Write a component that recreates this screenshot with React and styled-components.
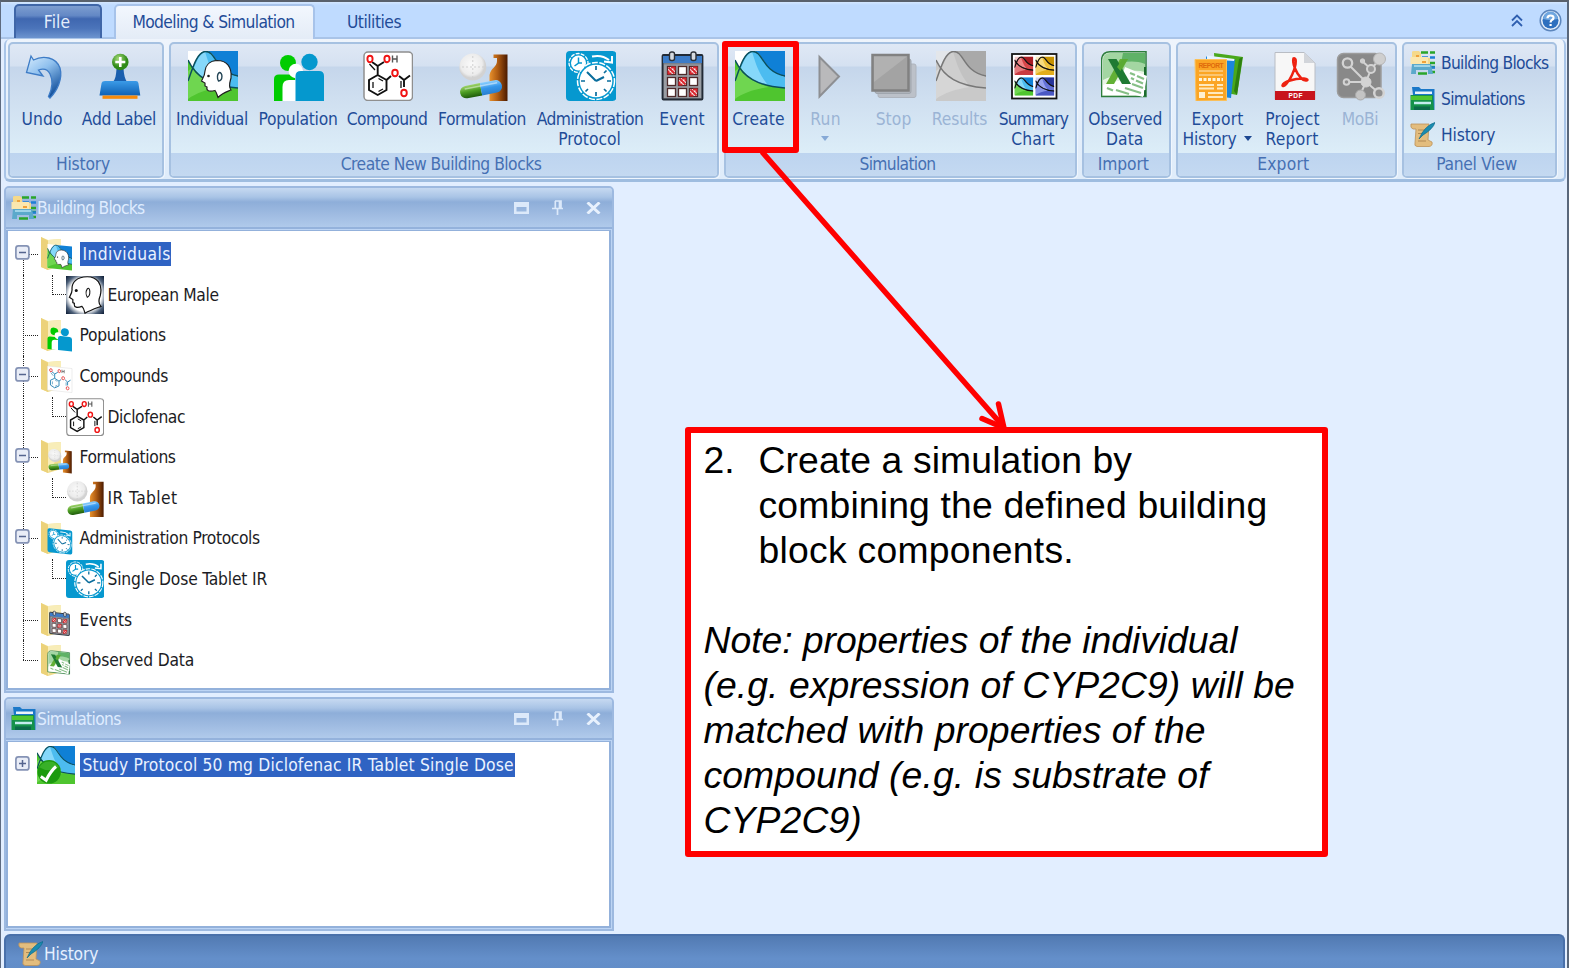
import React from "react";
import styled, { createGlobalStyle, css } from "styled-components";

const UI_FONT = '"DejaVu Sans Condensed", "DejaVu Sans", Tahoma, sans-serif';

/* Letter spacing (px) for each interface text. */
const TRACKING = {
  Undo: 0.09, "Add Label": -0.3, Individual: -0.38, Population: -0.26, Compound: -0.48,
  Formulation: -0.42, Administration: -0.5, Protocol: 0.02, Event: 0.2, Create: 0.15,
  Run: 0.3, Stop: 0.1, Results: -0.06, Summary: -0.8, Chart: 0.15, Observed: -0.1,
  Data: 0.05, Export: 0.2, History: -0.16, Project: 0.2, Report: 0.25, MoBi: -0.4,
  "Building Blocks": -0.72, Simulations: -0.66, "Create New Building Blocks": -0.5,
  Simulation: -0.7, Import: -0.1, "Panel View": -0.3, File: 0.1,
  "Modeling & Simulation": -0.64, Utilities: -0.5, Individuals: 0.4,
  "European Male": -0.35, Populations: -0.3, Compounds: -0.48, Diclofenac: -0.4,
  Formulations: -0.38, "IR Tablet": 0.42, "Administration Protocols": -0.38,
  "Single Dose Tablet IR": -0.17, Events: 0, "Observed Data": -0.17,
  "Study Protocol 50 mg Diclofenac IR Tablet Single Dose": 0.18,
};

const Global = createGlobalStyle`
  * { box-sizing: border-box; }
  body { margin: 0; overflow: hidden; background: #e2eeff; }
  svg { display: block; flex: none; }
`;

const TextSpan = styled.span`
  white-space: nowrap;
  letter-spacing: ${(p) => p.$track}px;
`;
const Text = ({ children }) => <TextSpan $track={TRACKING[children] ?? 0}>{children}</TextSpan>;

/* ---------- window ---------- */

const Window = styled.div`
  position: relative;
  width: 1569px;
  height: 968px;
  display: flex;
  flex-direction: column;
  overflow: hidden;
  font: 17.3px/20px ${UI_FONT};
  color: #1f4c98;
  background: #e2eeff;
  border-top: 2px solid #59616c;
  border-left: 1px solid #5e6b80;
  border-right: 2px solid #59677b;
`;

const TabStrip = styled.div`
  height: 37px;
  flex: none;
  display: flex;
  align-items: flex-end;
  padding-left: 13px;
  background: linear-gradient(#d4e7ff 0, #bfdbff 3px, #bfdbff 100%);
  border-bottom: 2px solid #a9c4e8;
`;

const tabBase = css`
  display: flex;
  justify-content: center;
  align-items: center;
  height: 34px;
  border-radius: 5px 5px 0 0;
`;
const FileTab = styled.div`
  ${tabBase}
  width: 88px;
  padding: 0 2px 0 0;
  color: #e4eefc;
  margin-bottom: -1px;
  border: 2px solid #3f66a8;
  border-bottom: 0;
  background: linear-gradient(#7d9dd0 0, #6388c5 30%, #3f67b0 40%, #4b74ba 70%, #6d94cf 100%);
`;
const ActiveTab = styled.div`
  ${tabBase}
  width: 201px;
  height: 37px;
  margin: 0 0 -4px 12px;
  padding: 0 2px 4px 0;
  background: linear-gradient(#f2f7fe, #e3ebf6);
  border: 2px solid #a7c3ea;
  border-bottom: 0;
`;
const PlainTab = styled.div`
  ${tabBase}
  width: 118px;
  padding-top: 3px;
`;
const StripTools = styled.div`
  margin-left: auto;
  display: flex;
  align-items: center;
  gap: 16px;
  height: 34px;
  padding-right: 5px;
`;

/* ---------- ribbon ---------- */

const Ribbon = styled.div`
  flex: none;
  display: flex;
  gap: 5px;
  height: 143px;
  margin: 0 1px 0 3px;
  padding: 3px 3px 1px 2px;
  background: linear-gradient(#eef4fc, #dfecfa);
  border: 2px solid #a9c5e8;
  border-top: 0;
  border-bottom: 3px solid #9fbde0;
  border-radius: 6px;
`;
const Group = styled.div`
  width: ${(p) => p.$w}px;
  display: flex;
  flex-direction: column;
  border: 2px solid #a6c1e1;
  border-radius: 5px;
  overflow: hidden;
  background: linear-gradient(#dfe8f5 0, #d5e1f1 22px, #c5d6eb 23px, #cfdff0 55px, #dcedf8 108px);
  box-shadow: 1px 1px 0 #eff6fe;
`;
const GroupBody = styled.div`
  flex: 1;
  display: flex;
  padding-top: 7px;
`;
const GroupTitle = styled.div`
  height: 23px;
  line-height: 23px;
  padding-right: 6px;
  text-align: center;
  color: #4670b3;
  background: linear-gradient(#bdd4ef, #c4d9f1);
`;
const Button = styled.div`
  width: ${(p) => p.$w}px;
  flex: none;
  display: flex;
  flex-direction: column;
  align-items: center;
  color: ${(p) => (p.$off ? "#9bb4d5" : "inherit")};
`;
const Caption = styled.div`
  display: flex;
  align-items: center;
  justify-content: center;
  gap: 7px;
  height: 20px;
  margin-top: ${(p) => (p.$first ? 8 : 0)}px;
  padding-right: ${(p) => (p.$first ? 2 : 3)}px;
`;
const DropArrow = styled.i`
  width: 0;
  height: 0;
  margin-top: -2px;
  border: 4px solid transparent;
  border-top: 5px solid ${(p) => (p.$off ? "#86a9d6" : "#1c4791")};
  border-bottom: 0;
`;
const SideList = styled.div`
  display: flex;
  flex-direction: column;
  gap: 11px;
  padding-left: 6px;
  margin-top: -1px;
`;
const SideItem = styled.div`
  display: flex;
  align-items: center;
  gap: 6px;
  height: 25px;
`;

/* ---------- docked panels ---------- */

const Workspace = styled.div`
  flex: 1;
  display: flex;
  flex-direction: column;
  gap: 4px;
  padding: 4px 0 0 3px;
`;
const Panel = styled.section`
  width: 610px;
  height: ${(p) => p.$h}px;
  flex: none;
  display: flex;
  flex-direction: column;
  border: 2px solid #9db9e0;
  border-radius: 5px 5px 0 0;
  background: #bcd4f4;
  overflow: hidden;
`;
const PanelHeader = styled.header`
  height: 41px;
  flex: none;
  display: flex;
  align-items: center;
  gap: 1px;
  padding: 0 11px 0 5px;
  color: #dfecff;
  border-bottom: 2px solid #94b2dc;
  background: linear-gradient(#c6d9f1 0, #a9c4e6 9px, #8eaed9 14px, #a0bce2 27px, #b0caeb 100%);
`;
const HeaderTools = styled.div`
  margin-left: auto;
  display: flex;
  align-items: center;
  gap: 21px;
`;
const PanelBody = styled.div`
  flex: 1;
  margin: 1px 1px 1px 0;
  border: 2px solid #93b1db;
  border-top-width: 1px;
  padding: 3px 0 0 6.5px;
  background: #fff;
  color: #1c1c24;
`;
const HistoryBar = styled.footer`
  flex: 1;
  display: flex;
  align-items: center;
  gap: 1px;
  margin: -1px 2px 0 0;
  padding: 3px 0 0 12px;
  color: #e6f0ff;
  border: 2px solid #4970aa;
  border-bottom: 0;
  border-radius: 6px 6px 0 0;
  background: linear-gradient(#527ab2, #648fca 70%, #628dc8);
`;

/* ---------- tree ---------- */

const Row = styled.div`
  height: 40.6px;
  display: flex;
  align-items: center;
`;
const dotted = "1px dotted #222";
const Trunk = styled.div`
  position: relative;
  align-self: stretch;
  width: ${(p) => (p.$pos === "none" ? 22 : 25)}px;
  display: flex;
  align-items: center;
  &::before {
    content: "";
    position: absolute;
    left: 8px;
    top: ${(p) => (p.$pos === "first" ? "50%" : 0)};
    bottom: ${(p) => (p.$pos === "last" ? "50%" : 0)};
    border-left: ${(p) => (p.$pos === "none" ? "0" : dotted)};
  }
  &::after {
    content: "";
    position: absolute;
    left: 8px;
    right: 2px;
    top: 50%;
    border-top: ${(p) => (p.$stub ? dotted : "0")};
  }
`;
const Elbow = styled.div`
  width: 14px;
  height: 20px;
  margin: -20px 0 0 12px;
  border-left: ${dotted};
  border-bottom: ${dotted};
`;
const Toggle = styled.svg`
  position: relative;
  z-index: 1;
  margin-top: -3px;
`;
const NodeLabel = styled.div`
  margin-left: ${(p) => p.$gap}px;
  line-height: 24px;
`;
const SelectedLabel = styled(NodeLabel)`
  height: 24px;
  width: ${(p) => p.$w}px;
  padding-left: 3px;
  overflow: hidden;
  color: #eaf2ff;
  background: #2f63c3;
`;

/* ---------- annotation ---------- */

const Overlay = styled.svg`
  position: absolute;
  left: -1px;
  top: -2px;
  pointer-events: none;
`;
const Callout = styled.aside`
  position: absolute;
  left: 684px;
  top: 425px;
  width: 643px;
  height: 430px;
  border: 6px solid #f00;
  border-radius: 3px;
  background: #fff;
  color: #000;
  font: 37.33px/45px "Liberation Sans", Arial, sans-serif;
  padding: 5px 0 0 12.5px;
`;
const Step = styled.div`
  display: flex;
`;
const StepNumber = styled.div`
  width: 55px;
`;
const Note = styled.div`
  margin-top: 45px;
  font-style: italic;
`;
const Line = styled.div`
  white-space: nowrap;
  letter-spacing: ${(p) => p.$track}px;
`;

/* ---------- icons (50 x 50 grid) ---------- */

const Icon = ({ size = 50, children, box = "0 0 50 50" }) => (
  <svg width={size} height={size} viewBox={box}>{children}</svg>
);

const PALETTES = {
  color: { dark: "#0f80d6", light: "#4cbcf0", sheen: "#86d8fa", low: "#4fc52f", low2: "#6fd650", line: "#0b4f5c", sky: "#fff" },
  gray: { dark: "#a9a9a9", light: "#c2c2c2", sheen: "#cecece", low: "#c9c9c9", low2: "#d6d6d6", line: "#777", sky: "#e3e6ea" },
  red: { dark: "#a81c22", light: "#d8474b", sheen: "#e88", low: "#c93a40", low2: "#e47b7e", line: "#3d0508", sky: "#f3c9c9" },
  gold: { dark: "#c79200", light: "#efc23a", sheen: "#f7dc80", low: "#e3ae1c", low2: "#f2cf62", line: "#4c3700", sky: "#faecc0" },
  navy: { dark: "#27349a", light: "#6472d8", sheen: "#98a3ee", low: "#4a58c4", low2: "#8793e6", line: "#0d1450", sky: "#ccd1f5" },
};
const Curves = ({ tone = "color" }) => {
  const c = PALETTES[tone];
  return (
    <g>
      <rect width="50" height="50" fill={c.sky} />
      <path d="M17 0H50V26C36 22 32 15 27 7C24 2 21 0 17 0Z" fill={c.dark} />
      <path d="M5 17C8 8 11 1 17 0C21 0 24 2 27 7C33 17 38 22 50 26V38C30 36 15 31 5 17Z" fill={c.light} />
      <path d="M6 17C9 9 12 3 17 1C20 9 22 20 32 33C20 31 12 27 6 17Z" fill={c.sheen} />
      <path d="M0 9C8 26 22 35 50 37V50H0Z" fill={c.low} />
      <path d="M0 20L5 16C12 26 22 33 34 36C20 38 8 42 0 48Z" fill={c.low2} />
      <path d="M0 9C8 26 22 35 50 37M0 30C4 20 8 2 17 .5C29 0 26 20 50 25" fill="none" stroke={c.line} strokeWidth="1.5" />
    </g>
  );
};
const Head = ({ stroke = "#222" }) => (
  <g>
    <path d="M29 9.5C21 10 17.500 15 17 20C17 24 15 27 13.500 30L17 32L17 35L19 36C18 40 21 41 27 39.500C29 42 29 44 30 46.500C34 42 38 41 43 39C40 35 42 31 43 27C44 16 39 9.500 29 9.500Z" fill="#fff" stroke={stroke} strokeWidth="1.2" />
    <path d="M31 21.500C35 21 35 30 30.500 30C29 27 29 24 31 21.500" fill="none" stroke="#245" strokeWidth="1.4" />
    <circle cx="20.500" cy="25" r="1.300" fill="#222" />
  </g>
);
const IndividualArt = () => <g><Curves /><Head /></g>;
const PopulationArt = () => (
  <g>
    <circle cx="14" cy="12" r="8" fill="#0c0" />
    <path d="M0 50V28Q0 23.500 5 23.500H21V50Z" fill="#0c0" />
    <circle cx="21.800" cy="20" r="7.200" fill="#fff" />
    <path d="M8.500 50V36Q8.500 29 15 29H22V50Z" fill="#fff" />
    <circle cx="35.500" cy="11" r="8.200" fill="#0598ce" />
    <path d="M21.500 50V25Q21.500 20 27 20H45Q50 20 50 25V50Z" fill="#0598ce" />
  </g>
);
const Molecule = ({ bond = "#111", oxygen = "#f01414" }) => (
  <g>
    <g fill="none" stroke={bond} strokeWidth="1.900">
      <path d="M14.700 24L23.500 29V39L14.700 44L6 39V29ZM14.700 24V15L9 11M14.700 15L21 11M23.500 29L28 25M36 25L41 29L47 24.500M41 29V36" />
      <path d="M10 31V37M15.500 27.500L20 30M15.500 40.500L20 38M12 19L6.500 13M38 30V37" strokeWidth="1.300" />
    </g>
    <g fill="none" stroke={oxygen} strokeWidth="1.900">
      <ellipse cx="7" cy="8" rx="2.600" ry="3.200" />
      <ellipse cx="24" cy="8" rx="2.600" ry="3.200" />
      <ellipse cx="32" cy="22" rx="2.800" ry="3.200" />
      <ellipse cx="41" cy="42" rx="2.800" ry="3.200" />
    </g>
    <path d="M29.500 4.500V11.500M34 4.500V11.500M29.500 8H34" stroke="#555" strokeWidth="1.400" />
  </g>
);
const CompoundArt = () => (
  <g><rect x="1" y="1" width="48.500" height="48.500" rx="4" fill="#fff" stroke="#8f8f8f" strokeWidth="1.500" /><Molecule /></g>
);
const FormulationArt = () => (
  <g>
    <defs>
      <linearGradient id="bottle"><stop offset="0" stopColor="#e8912c" /><stop offset=".45" stopColor="#b05c12" /><stop offset="1" stopColor="#4a1a00" /></linearGradient>
      <linearGradient id="pillG" x2="0" y2="1"><stop offset="0" stopColor="#9ed36a" /><stop offset=".5" stopColor="#4b9c22" /><stop offset="1" stopColor="#1f5c0c" /></linearGradient>
      <linearGradient id="pillB" x2="0" y2="1"><stop offset="0" stopColor="#8ccfff" /><stop offset=".5" stopColor="#3596ea" /><stop offset="1" stopColor="#2a7fd0" /></linearGradient>
      <radialGradient id="tab" cx=".45" cy=".4"><stop offset="0" stopColor="#fafafa" /><stop offset=".8" stopColor="#ececec" /><stop offset="1" stopColor="#d2d2d2" /></radialGradient>
    </defs>
    <path d="M35.500 3.500H49.500V50H31.500V24C32.500 17 39 16 39 10V7H35.500Z" fill="url(#bottle)" />
    <circle cx="14.800" cy="16" r="13.500" fill="url(#tab)" />
    <path d="M14.800 5V27M4 16H26" stroke="#cfcfcf" strokeDasharray="2 2" />
    <g transform="rotate(-11 23 38)">
      <path d="M23 32V44.500H8A6.200 6.200 0 0 1 8 32Z" fill="url(#pillG)" />
      <path d="M23 32H38A6.200 6.200 0 0 1 38 44.500H23Z" fill="url(#pillB)" />
      <path d="M7 35H40" stroke="#fff" strokeOpacity=".45" strokeWidth="1.500" />
    </g>
  </g>
);
const ProtocolArt = () => (
  <g>
    <rect width="50.500" height="50" rx="4" fill="#0698cf" />
    <circle cx="12.500" cy="12" r="9.500" fill="#0698cf" stroke="#fff" strokeWidth="1.300" strokeDasharray="4 1.200" />
    <circle cx="12.500" cy="12" r="7.500" fill="#fff" />
    <path d="M12.500 6.500V12L8.500 15M12.500 12L16 12" fill="none" stroke="#0698cf" strokeWidth="1.500" />
    <circle cx="30" cy="30" r="18.500" fill="#0698cf" stroke="#fff" strokeWidth="1.500" strokeDasharray="6 1.500" />
    <circle cx="30" cy="30" r="16.300" fill="#fff" />
    <path d="M30 30L21 21M30 30L38 26" fill="none" stroke="#0a6d9c" strokeWidth="2" />
    <path d="M30 15V19M30 41V45M15 30H19M41 30H45M19.500 40.500L22 38M40.500 40.500L38 38M40.500 19.500L38 22" stroke="#0a6d9c" strokeWidth="1.700" />
    <path d="M26 5.500C33 4 38 5 43 9M46 5V11.500L38 10.500" fill="none" stroke="#fff" strokeWidth="2" />
  </g>
);
const EventArt = () => (
  <g>
    <rect x="4.500" y="4" width="40" height="44.500" rx="1" fill="#7b8088" stroke="#222a35" strokeWidth="1.800" />
    <rect x="5" y="5" width="39" height="7" fill="#3c7cc8" />
    <rect x="6" y="13.500" width="37" height="33.500" fill="#9a9ea4" />
    {[0, 1, 2].map((r) => [0, 1, 2].map((c) => {
      const hot = (r === 0 && c !== 1) || (r === 1 && c === 1) || (r === 2 && c === 2);
      const x = 9.5 + c * 11, y = 15.5 + r * 11;
      return (
        <g key={`${r}${c}`}>
          <rect x={x} y={y} width="8" height="8" fill="#fff" stroke="#4d2a2a" strokeWidth="1.300" />
          {hot && <path d={`M${x + 1} ${y + 1}L${x + 7} ${y + 7}M${x + 3.5} ${y + 1}H${x + 7}V${y + 4}M${x + 1} ${y + 4}V${y + 7}H${x + 4}`} stroke="#d8252c" strokeWidth="2" fill="none" />}
        </g>
      );
    }))}
    <rect x="11.500" y="1" width="5" height="8.500" rx="2" fill="#d5dae0" stroke="#2b3038" strokeWidth="1.400" />
    <rect x="33" y="1" width="5" height="8.500" rx="2" fill="#d5dae0" stroke="#2b3038" strokeWidth="1.400" />
  </g>
);
const ExcelArt = () => (
  <g>
    <path d="M9 .8H45V45.500H.5V9Q1 1 9 .8Z" fill="#e9f5e6" stroke="#2c7d3c" strokeWidth="1.500" />
    <path d="M9 2H44V21C30 17 15 23 2 29V9Q2 2 9 2Z" fill="#a3d6a2" />
    <path d="M22 2H44V13C36 10 28 10 20 12Z" fill="#5fb267" />
    <path d="M2 34C15 28 28 30 44 26V44H2Z" fill="#fff" />
    <path d="M44 16V30M44 39V45" stroke="#1c6b2d" strokeWidth="2" />
    <path d="M24 16L46 25L42 46L16 39Z" fill="#fff" />
    <path d="M29 22L34 24M36 25L43 28M30 27L33 28.500M35 29.500L42 32.500M31 33L42 37M6 37L12 39.500M15 39L28 43M24 37L40 42" stroke="#86bf86" strokeWidth="2.200" />
    <path d="M19 8H27L13 33H5Z" fill="#62b035" />
    <path d="M7 8H15.500L30 33H21Z" fill="#1f7a33" />
    <path d="M19.500 20L24 12L27 8H21.500L16 16Z" fill="#5aaa33" />
  </g>
);
const UndoArt = () => (
  <g>
    <defs><linearGradient id="undo" x1="0" y1="0" x2=".6" y2="1"><stop offset="0" stopColor="#d7ecfd" /><stop offset=".45" stopColor="#8fc0ee" /><stop offset="1" stopColor="#17549f" /></linearGradient></defs>
    <path d="M13 5L15.500 9C25 4 38 6 42 17C45 28 39 40 32 47L30.500 45.500C35 36 35 29 32 23C30 19 26 17 20.500 19L25 25L8.500 21.500Z" fill="url(#undo)" stroke="#3e7cc6" strokeWidth="1.300" />
  </g>
);
const LabelArt = () => (
  <g>
    <defs>
      <linearGradient id="stamp" x2="0" y2="1"><stop offset="0" stopColor="#3b9be8" /><stop offset="1" stopColor="#0f61b4" /></linearGradient>
      <radialGradient id="plus" cx=".4" cy=".3"><stop offset="0" stopColor="#a8dd7c" /><stop offset="1" stopColor="#2f8a17" /></radialGradient>
    </defs>
    <path d="M21.500 18H28.500C29 24 30 28 32 31H18C20.500 28 21 24 21.500 18Z" fill="#1a5fae" />
    <path d="M10 30H41Q43 30 43.400 32L45.300 44.500H4.500L6.600 32Q7 30 10 30Z" fill="url(#stamp)" />
    <rect x="7.500" y="44.500" width="35" height="3.300" fill="#f68b0c" />
    <circle cx="25.300" cy="11" r="8.300" fill="url(#plus)" />
    <path d="M25.300 6V16M20.300 11H30.300" stroke="#fff" strokeWidth="2.600" />
  </g>
);
const RunArt = () => <path d="M17.500 6L37 25.500L17.500 45.500Z" fill="#b9b9bb" stroke="#8d8f93" strokeWidth="2" />;
const StopArt = () => (
  <g>
    <rect x="8" y="13" width="38" height="33.500" rx="2" fill="#bcc1c9" stroke="#aeb4bd" />
    <rect x="5" y="8" width="36" height="34.500" rx="2" fill="#aeb3ba" stroke="#a0a6ae" />
    <rect x="2.500" y="4" width="36" height="35.500" fill="#a3a3a3" stroke="#818181" strokeWidth="2.500" />
    <path d="M4 5.500H37L4 31Z" fill="#b1b1b1" />
  </g>
);
const SummaryArt = () => (
  <g transform="translate(-1.500 0)">
    <rect x="3.500" y="3" width="44.500" height="44.500" fill="#fff" stroke="#151515" strokeWidth="1.800" />
    {[["red", 6, 5.5], ["gold", 27, 5.5], ["color", 6, 26.3], ["navy", 27, 26.3]].map(([tone, x, y]) => (
      <svg key={tone} x={x} y={y} width="18.800" height="18.500" viewBox="0 0 50 50" preserveAspectRatio="none"><Curves tone={tone} />
        <path d="M0 9C8 26 22 35 50 37M0 30C4 20 8 2 17 2C29 0 26 20 50 25" fill="none" stroke="#111" strokeWidth="3.200" />
      </svg>
    ))}
  </g>
);
const ReportText = styled.text`
  font: bold 6.6px "Liberation Sans", sans-serif;
`;
const ExportArt = () => (
  <g>
    <path d="M20 2L49 6L43 44L22 40Z" fill="#49a81b" />
    <path d="M45 8L48.500 6L43 44L40 40Z" fill="#2d7f10" />
    <path d="M12 5.500L41 8.500L37 47L14 44Z" fill="#1b86dc" />
    <path d="M13 4.500L40.500 8L40 10L13 8Z" fill="#e7f3ff" />
    <path d="M1 8.500H32.500V49.500L2 50Z" fill="#fba524" stroke="#fbc15a" />
    <ReportText x="4.500" y="16.500" fill="#e06a0c" textLength="25">REPORT</ReportText>
    <path d="M5 20H29M5 24H29" stroke="#fbd08a" strokeWidth="1.500" />
    <path d="M5 28.500H29" stroke="#fff3d8" strokeWidth="3" strokeDasharray="3 1.500" />
    <path d="M5 34H20M23 34H29M5 37.500H20M23 37.500H29M14 42H29M14 46H29" stroke="#ffe9bd" strokeWidth="2" />
    <rect x="5" y="41" width="6" height="6" fill="#fff0d0" />
  </g>
);
const PdfArt = () => (
  <g>
    <path d="M6 1.500H35L46 12V48.500H6Z" fill="#f7f7f7" stroke="#b9bdc4" />
    <path d="M35 1.500V12H46Z" fill="#d2d5da" />
    <rect x="6" y="40" width="40" height="9" fill="#c8141c" />
    <ReportText x="19.500" y="47" fill="#fff" textLength="14">PDF</ReportText>
    <path d="M24.500 7.500C29 6 26 18 23 24C20 31 14 37 13.500 34.500C14 31 26 27 35 27.500C42 28 37 32 32 27C27 22 23 12 24.500 7.500Z" fill="none" stroke="#ee2211" strokeWidth="2.500" />
  </g>
);
const MobiArt = () => (
  <g stroke="#d3d3d3">
    <rect x="1.500" y="2.500" width="43.500" height="44" rx="6" fill="#898989" stroke="#9c9c9c" strokeWidth="1.500" />
    <path d="M11 12L30 31M30 31L35 18L26 10M35 18L44 8M11 31H30L24 44M30 31L43 42" fill="none" strokeWidth="2" />
    <circle cx="11.500" cy="12" r="4.700" fill="#8f8f8f" strokeWidth="2.300" />
    <circle cx="26.500" cy="10" r="2.200" fill="#cfcfcf" />
    <circle cx="43.500" cy="8" r="6" fill="#cfcfcf" stroke="#b4b4b4" />
    <circle cx="35" cy="18" r="4" fill="#9a9a9a" strokeWidth="2" />
    <circle cx="10.500" cy="31" r="2.800" fill="#8f8f8f" strokeWidth="2" />
    <circle cx="30" cy="31" r="5" fill="#d3d3d3" />
    <circle cx="24.500" cy="44" r="5" fill="#c4c4c4" stroke="#a9a9a9" />
    <circle cx="43" cy="42" r="4.800" fill="#8f8f8f" strokeWidth="2.500" />
  </g>
);

/* 25 x 25 grid */
const BlocksArt = () => (
  <g>
    <path d="M11 2.500H18M20 2.500H25M20 13H25M18 17H25M20 22H25M8 23.500H17" stroke="#2aa52a" strokeWidth="2.500" />
    <path d="M12 7.500H18M20 7.500H25M21 17.500H25" stroke="#1f7fd6" strokeWidth="2.500" />
    <path d="M2 2Q2 1 4 1H9L11 3V8H20V15H2Z" fill="#f5d98a" />
    <path d="M.5 7H18V14H.5Z" fill="#fbe7ae" />
    <path d="M6 6H9M12 12H16" stroke="#f0a23a" strokeWidth="2" />
    <path d="M2 14H21L23 24H18V20H6V24H1Z" fill="#5ba9cb" />
    <path d="M4 16H20" stroke="#9dd3e8" strokeWidth="2" />
  </g>
);
const SimsArt = () => (
  <g>
    <path d="M2 1H9L11 3H24.500V24H20L3 9Z" fill="#1b78c8" />
    <path d="M5 5.500H22V8H5Z" fill="#eaf4fb" />
    <path d="M.5 9H23L24 24H.5Z" fill="#14924b" />
    <path d="M1 10H22V14H1Z" fill="#4fc531" />
    <path d="M4 17H21" stroke="#c4ecf0" strokeWidth="2.500" />
    <path d="M4 20.500H20V24H4Z" fill="#0b6b4c" />
  </g>
);
const ScrollArt = () => (
  <g>
    <path d="M1 2H19L18 18L22 20Q23 24 19 24.500H7Q4 24 5 21L6 7H3Q0 6 1 2Z" fill="#e3bd7e" stroke="#bd935a" strokeWidth=".8" />
    <path d="M8 8H16M8 11.500H15M8 19H16" stroke="#b18a55" strokeWidth="1.200" />
    <path d="M9 17L12 11Q17 3 25 .5Q23 7 13 13Z" fill="#1a8cb0" stroke="#0d6c8c" strokeWidth=".7" />
  </g>
);

const Folder = ({ art: Art }) => (
  <svg width="34" height="36" viewBox="0 0 34 36">
    <path d="M1 1L8 4L21 3V30L8 34L1 31Z" fill="#f0dc8c" />
    <path d="M8 4L21 3V14L8 33Z" fill="#f8edb8" />
    <path d="M1 1L8 5V34L1 31Z" fill="#ecd27a" />
    <g transform="translate(7.500 8) skewY(6) scale(.49 .48)"><Art /></g>
  </svg>
);
const CompoundTint = () => (
  <g><rect width="50" height="50" fill="#fff" stroke="#ddd" /><Molecule bond="#2d86b5" oxygen="#e84a4a" /></g>
);
const MaleArt = () => (
  <g>
    <defs><radialGradient id="halo" r=".72"><stop offset=".6" stopColor="#fff" /><stop offset=".78" stopColor="#4d6079" /><stop offset="1" stopColor="#03122a" /></radialGradient></defs>
    <rect width="50" height="50" fill="url(#halo)" />
    <path d="M28 1C14 1 7 9 8 18C8 22 6 25 4.500 28L9 31L9 35L11 36C10 42 15 42 21 40C24 43 24 46 25 49C32 45 38 43 46 40C42 36 43 31 45 26C49 10 40 1 28 1Z" fill="#fff" stroke="#111" strokeWidth="1.600" />
    <path d="M28 17C32 13 33 26 28 28C26 25 26 20 28 17" fill="none" stroke="#111" strokeWidth="1.400" />
    <circle cx="13.500" cy="19" r="2" fill="#111" />
  </g>
);
const DoneSimArt = () => (
  <g>
    <Curves />
    <circle cx="16" cy="34" r="15.500" fill="#1c9a0e" />
    <path d="M3 28A15 15 0 0 1 29 28Q16 36 3 28Z" fill="#38b028" />
    <path d="M5 40L12 45Q18 33 25 27" fill="none" stroke="#fff" strokeWidth="4" />
  </g>
);

const ExpandBox = ({ open }) => (
  <Toggle width="15" height="15" viewBox="0 0 15 15">
    <rect x=".9" y=".9" width="13" height="13" rx="2.500" fill="#e9edf7" stroke="#8593b5" strokeWidth="1.700" />
    <path d={open ? "M4 7.500H11" : "M4 7.500H11M7.500 4V11"} stroke="#55658f" strokeWidth="1.500" />
  </Toggle>
);

/* ---------- composition ---------- */

const RibbonButton = ({ w, art: Art, lines, off, drop }) => (
  <Button $w={w} $off={off}>
    <Icon><Art /></Icon>
    <Caption $first><Text>{lines[0]}</Text></Caption>
    {(lines[1] || drop) && (
      <Caption>
        {lines[1] && <Text>{lines[1]}</Text>}
        {drop && <DropArrow $off={off} />}
      </Caption>
    )}
  </Button>
);
const GrayCurves = () => <Curves tone="gray" />;

const GROUPS = [
  { title: "History", w: 156, items: [
    { w: 66, art: UndoArt, lines: ["Undo"] },
    { w: 88, art: LabelArt, lines: ["Add Label"] },
  ] },
  { title: "Create New Building Blocks", w: 550, items: [
    { w: 84, art: IndividualArt, lines: ["Individual"] },
    { w: 88, art: PopulationArt, lines: ["Population"] },
    { w: 90, art: CompoundArt, lines: ["Compound"] },
    { w: 100, art: FormulationArt, lines: ["Formulation"] },
    { w: 116, art: ProtocolArt, lines: ["Administration", "Protocol"] },
    { w: 68, art: EventArt, lines: ["Event"] },
  ] },
  { title: "Simulation", w: 353, items: [
    { w: 67, art: Curves, lines: ["Create"] },
    { w: 67, art: RunArt, lines: ["Run"], off: true, drop: true },
    { w: 69, art: StopArt, lines: ["Stop"], off: true },
    { w: 63, art: GrayCurves, lines: ["Results"], off: true },
    { w: 85, art: SummaryArt, lines: ["Summary", "Chart"] },
  ] },
  { title: "Import", w: 88.5, items: [{ w: 84.5, art: ExcelArt, lines: ["Observed", "Data"] }] },
  { title: "Export", w: 221.5, items: [
    { w: 82, art: ExportArt, lines: ["Export", "History"], drop: true },
    { w: 68, art: PdfArt, lines: ["Project", "Report"] },
    { w: 67, art: MobiArt, lines: ["MoBi"], off: true },
  ] },
];

const TREE = [
  { label: "Individuals", art: IndividualArt, open: true, selected: 91, pos: "first", child: ["European Male", MaleArt] },
  { label: "Populations", art: PopulationArt },
  { label: "Compounds", art: CompoundTint, open: true, child: ["Diclofenac", CompoundArt] },
  { label: "Formulations", art: FormulationArt, open: true, child: ["IR Tablet", FormulationArt] },
  { label: "Administration Protocols", art: ProtocolArt, open: true, child: ["Single Dose Tablet IR", ProtocolArt] },
  { label: "Events", art: EventArt },
  { label: "Observed Data", art: ExcelArt, pos: "last" },
];

const WindowTools = () => (
  <HeaderTools>
    <svg width="15" height="12" viewBox="0 0 15 12"><path d="M0 0H15V12H0ZM2.500 5V9.500H12.500V5Z" fill="#dce9fa" fillRule="evenodd" /></svg>
    <svg width="15" height="15" viewBox="0 0 15 15"><path d="M5 1H11V8M5.300 1V8M9.500 1V8M2 8.500H13M7.500 9V15" fill="none" stroke="#dce9fa" strokeWidth="1.700" /></svg>
    <svg width="15" height="12" viewBox="0 0 15 12"><path d="M1.500 .5L13.500 11.500M13.500 .5L1.500 11.500" stroke="#e8f1fd" strokeWidth="3" /></svg>
  </HeaderTools>
);

export default function App() {
  return (
    <Window>
      <Global />
      <TabStrip>
        <FileTab><Text>File</Text></FileTab>
        <ActiveTab><Text>Modeling & Simulation</Text></ActiveTab>
        <PlainTab><Text>Utilities</Text></PlainTab>
        <StripTools>
          <svg width="12" height="13" viewBox="0 0 12 13"><path d="M1 6.500L6 1.500L11 6.500M1 12L6 7L11 12" fill="none" stroke="#2f5fb0" strokeWidth="1.800" /></svg>
          <svg width="23" height="23" viewBox="0 0 23 23">
            <circle cx="11.500" cy="11.500" r="10.300" fill="#e6f0fb" stroke="#5c86bd" strokeWidth="1.500" />
            <circle cx="11.500" cy="11.500" r="8" fill="#2d6fbe" />
            <path d="M4 10A7.500 7.500 0 0 1 19 10Q11 12 4 10Z" fill="#6fa6df" />
            <path d="M8.500 9.300Q8.500 6.500 11.500 6.500Q14.700 6.500 14.500 9Q14.300 10.500 12.500 11.300Q11.600 12 11.600 13.400M11.600 15V17" fill="none" stroke="#fff" strokeWidth="2.200" />
          </svg>
        </StripTools>
      </TabStrip>

      <Ribbon>
        {GROUPS.map((g) => (
          <Group key={g.title} $w={g.w}>
            <GroupBody>{g.items.map((b) => <RibbonButton key={b.lines[0]} {...b} />)}</GroupBody>
            <GroupTitle><Text>{g.title}</Text></GroupTitle>
          </Group>
        ))}
        <Group $w={155}>
          <GroupBody>
            <SideList>
              <SideItem><Icon size={25} box="0 0 25 25"><BlocksArt /></Icon><Text>Building Blocks</Text></SideItem>
              <SideItem><Icon size={25} box="0 0 25 25"><SimsArt /></Icon><Text>Simulations</Text></SideItem>
              <SideItem><Icon size={25} box="0 0 25 25"><ScrollArt /></Icon><Text>History</Text></SideItem>
            </SideList>
          </GroupBody>
          <GroupTitle><Text>Panel View</Text></GroupTitle>
        </Group>
      </Ribbon>

      <Workspace>
        <Panel $h={507}>
          <PanelHeader>
            <Icon size={25} box="0 0 25 25"><BlocksArt /></Icon><Text>Building Blocks</Text>
            <WindowTools />
          </PanelHeader>
          <PanelBody>
            {TREE.map((n) => (
              <React.Fragment key={n.label}>
                <Row>
                  <Trunk $pos={n.pos} $stub>{n.open && <ExpandBox open />}</Trunk>
                  <Folder art={n.art} />
                  {n.selected
                    ? <SelectedLabel $gap={6} $w={n.selected}><Text>{n.label}</Text></SelectedLabel>
                    : <NodeLabel $gap={6}><Text>{n.label}</Text></NodeLabel>}
                </Row>
                {n.child && (
                  <Row>
                    <Trunk />
                    <Elbow />
                    <Icon size={38}>{React.createElement(n.child[1])}</Icon>
                    <NodeLabel $gap={4}><Text>{n.child[0]}</Text></NodeLabel>
                  </Row>
                )}
              </React.Fragment>
            ))}
          </PanelBody>
        </Panel>

        <Panel $h={234}>
          <PanelHeader>
            <Icon size={25} box="0 0 25 25"><SimsArt /></Icon><Text>Simulations</Text>
            <WindowTools />
          </PanelHeader>
          <PanelBody>
            <Row>
              <Trunk $pos="none"><ExpandBox /></Trunk>
              <Icon size={38}><DoneSimArt /></Icon>
              <SelectedLabel $gap={5} $w={435}><Text>Study Protocol 50 mg Diclofenac IR Tablet Single Dose</Text></SelectedLabel>
            </Row>
          </PanelBody>
        </Panel>

        <HistoryBar>
          <Icon size={25} box="0 0 25 25"><ScrollArt /></Icon><Text>History</Text>
        </HistoryBar>
      </Workspace>

      <Callout>
        <Step>
          <StepNumber>2.</StepNumber>
          <div>
            <Line $track={0.1}>Create a simulation by</Line>
            <Line $track={0.15}>combining the defined building</Line>
            <Line $track={0.25}>block components.</Line>
          </div>
        </Step>
        <Note>
          <Line $track={-0.04}>Note: properties of the individual</Line>
          <Line $track={0.06}>(e.g. expression of CYP2C9) will be</Line>
          <Line $track={0.07}>matched with properties of the</Line>
          <Line $track={0.1}>compound (e.g. is substrate of</Line>
          <Line $track={0.1}>CYP2C9)</Line>
        </Note>
      </Callout>

      <Overlay width="1569" height="968">
        <g fill="none" stroke="#f00" strokeLinejoin="round" strokeLinecap="round">
          <rect x="725" y="44" width="71" height="106" strokeWidth="6" />
          <path d="M763 153L1002 425" strokeWidth="5.500" />
          <path d="M982 418.500L1004 428L998.500 404" strokeWidth="5.500" />
        </g>
      </Overlay>
    </Window>
  );
}
